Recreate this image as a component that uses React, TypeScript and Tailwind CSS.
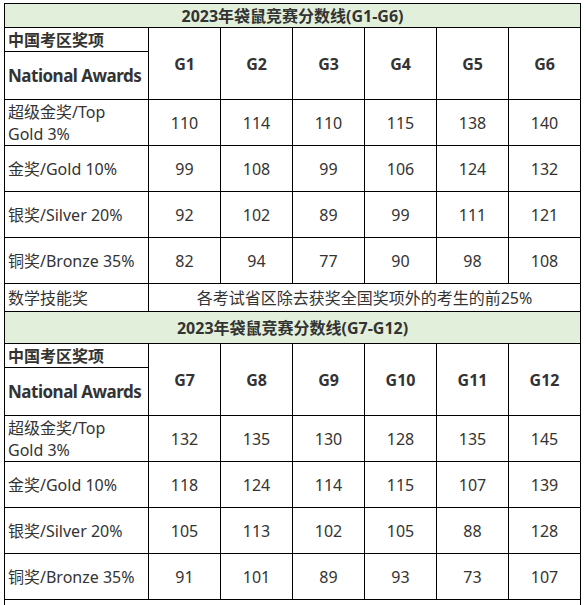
const sections = [
  {
    title: "2023年袋鼠竞赛分数线(G1-G6)",
    grades: ["G1", "G2", "G3", "G4", "G5", "G6"],
    rows: [
      { label: "超级金奖/Top Gold 3%", scores: [110, 114, 110, 115, 138, 140] },
      { label: "金奖/Gold 10%", scores: [99, 108, 99, 106, 124, 132] },
      { label: "银奖/Silver 20%", scores: [92, 102, 89, 99, 111, 121] },
      { label: "铜奖/Bronze 35%", scores: [82, 94, 77, 90, 98, 108] },
    ],
    titleH: "h-[24px]",
    skill: true,
  },
  {
    title: "2023年袋鼠竞赛分数线(G7-G12)",
    grades: ["G7", "G8", "G9", "G10", "G11", "G12"],
    rows: [
      { label: "超级金奖/Top Gold 3%", scores: [132, 135, 130, 128, 135, 145] },
      { label: "金奖/Gold 10%", scores: [118, 124, 114, 115, 107, 139] },
      { label: "银奖/Silver 20%", scores: [105, 113, 102, 105, 88, 128] },
      { label: "铜奖/Bronze 35%", scores: [91, 101, 89, 93, 73, 107] },
    ],
    titleH: "h-[32px]",
    skill: false,
  },
];

const cell = "border border-black";

export default function App() {
  return (
    <div
      className="h-[605px] w-[586px] overflow-hidden bg-white pl-[4px] pt-[3px] text-[#333] text-[16px]"
      style={{ fontFamily: '"Noto Sans", "Noto Sans CJK SC", sans-serif' }}
    >
      <table className="w-[576px] table-fixed border-collapse">
        <colgroup>
          <col className="w-[144px]" />
          <col className="w-[72px]" />
          <col className="w-[72px]" />
          <col className="w-[72px]" />
          <col className="w-[72px]" />
          <col className="w-[72px]" />
          <col className="w-[72px]" />
        </colgroup>
        <tbody>
          {sections.map((s) => (
            <Section key={s.title} {...s} />
          ))}
          <tr className="h-[20px]">
            <td colSpan={7} className="border-x border-black p-0" />
          </tr>
        </tbody>
      </table>
    </div>
  );
}

function Section({
  title,
  grades,
  rows,
  titleH,
  skill,
}: {
  title: string;
  grades: string[];
  rows: { label: string; scores: number[] }[];
  titleH: string;
  skill: boolean;
}) {
  return (
    <>
      <tr className={titleH}>
        <td colSpan={7} className={`${cell} bg-[#e2efda] p-0 text-center font-bold leading-none`}>
          {title}
        </td>
      </tr>
      <tr className="h-[24px]">
        <td className={`${cell} px-[3px] py-0 font-bold leading-none`}>中国考区奖项</td>
        {grades.map((g) => (
          <td key={g} rowSpan={2} className={`${cell} p-0 text-center font-bold`}>
            {g}
          </td>
        ))}
      </tr>
      <tr className="h-[48px]">
        <td className={`${cell} whitespace-nowrap py-0 pl-[3px] pr-0 text-[17px] font-bold tracking-[-0.5px]`}>
          National Awards
        </td>
      </tr>
      {rows.map((r) => (
        <tr key={r.label} className="h-[46px]">
          <td className={`${cell} py-0 pl-[3px] pr-[8px] leading-[22px]`}>{r.label}</td>
          {r.scores.map((n, i) => (
            <td key={i} className={`${cell} p-0 text-center`}>
              {n}
            </td>
          ))}
        </tr>
      ))}
      {skill && (
        <tr className="h-[28px]">
          <td className={`${cell} px-[3px] py-0 leading-none`}>数学技能奖</td>
          <td colSpan={6} className={`${cell} p-0 text-center leading-none`}>
            各考试省区除去获奖全国奖项外的考生的前25%
          </td>
        </tr>
      )}
    </>
  );
}
